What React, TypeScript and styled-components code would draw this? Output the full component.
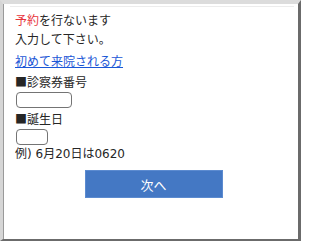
import React from "react";
import styled, { createGlobalStyle } from "styled-components";

const GlobalStyle = createGlobalStyle`
  html, body {
    margin: 0;
    padding: 0;
    background: #ffffff;
  }
  body {
    font-family: "Noto Sans CJK JP", "Liberation Sans", sans-serif;
  }
`;

const Frame = styled.div`
  width: 301px;
  height: 241px;
  box-sizing: border-box;
  background: #ffffff;
  border-top: 4px solid #dcdcdc;
  border-left: 3px solid #d6d6d6;
  border-right: 3px solid #6b6b6b;
  border-bottom: 2px solid #6b6b6b;
  box-shadow: inset 1px 0 0 #9a9a9a;
`;

const Panel = styled.div`
  margin: 2px 4px 0 7px;
  border-top: 1px solid #ececec;
  padding: 3px 0 0 5px;
  display: flex;
  flex-direction: column;
  align-items: flex-start;
`;

const Line = styled.div<{ $gap?: number; $latin?: boolean }>`
  font-family: ${(p) =>
    p.$latin
      ? `"DejaVu Sans", "Noto Sans CJK JP", sans-serif`
      : `"Noto Sans CJK JP", "Liberation Sans", sans-serif`};
  font-size: 12px;
  line-height: 19px;
  height: 19px;
  color: #262626;
  white-space: nowrap;
  margin-top: ${(p) => p.$gap ?? 0}px;
`;

const Red = styled.span`
  color: #e8333a;
`;

const Link = styled.a`
  color: #1a56d6;
  text-decoration: underline;
  cursor: pointer;
`;

const Field = styled.input<{ $w: number }>`
  width: ${(p) => p.$w}px;
  height: 16px;
  box-sizing: border-box;
  margin: 1px 0 0 1px;
  padding: 0 3px;
  border: 1px solid #747474;
  border-radius: 4px;
  background: #ffffff;
  outline: none;
  font-size: 12px;
`;

const Button = styled.button`
  align-self: center;
  margin-top: 6px;
  margin-left: -2px;
  width: 138px;
  height: 28px;
  border: 1px solid #5c8bd0;
  background: #4478c4;
  color: #ffffff;
  font-family: "Noto Sans CJK JP", "Liberation Sans", sans-serif;
  font-size: 13px;
  cursor: pointer;
  padding: 0;
`;

export default function App() {
  return (
    <>
      <GlobalStyle />
      <Frame>
        <Panel>
          <Line>
            <Red>予約</Red>を行ないます
          </Line>
          <Line>入力して下さい。</Line>
          <Line $gap={2.5}>
            <Link>初めて来院される方</Link>
          </Line>
          <Line $gap={2.5}>■診察券番号</Line>
          <Field $w={56} />
          <Line $gap={1}>■誕生日</Line>
          <Field $w={32} />
          <Line $latin>例) 6月20日は0620</Line>
          <Button>次へ</Button>
        </Panel>
      </Frame>
    </>
  );
}
